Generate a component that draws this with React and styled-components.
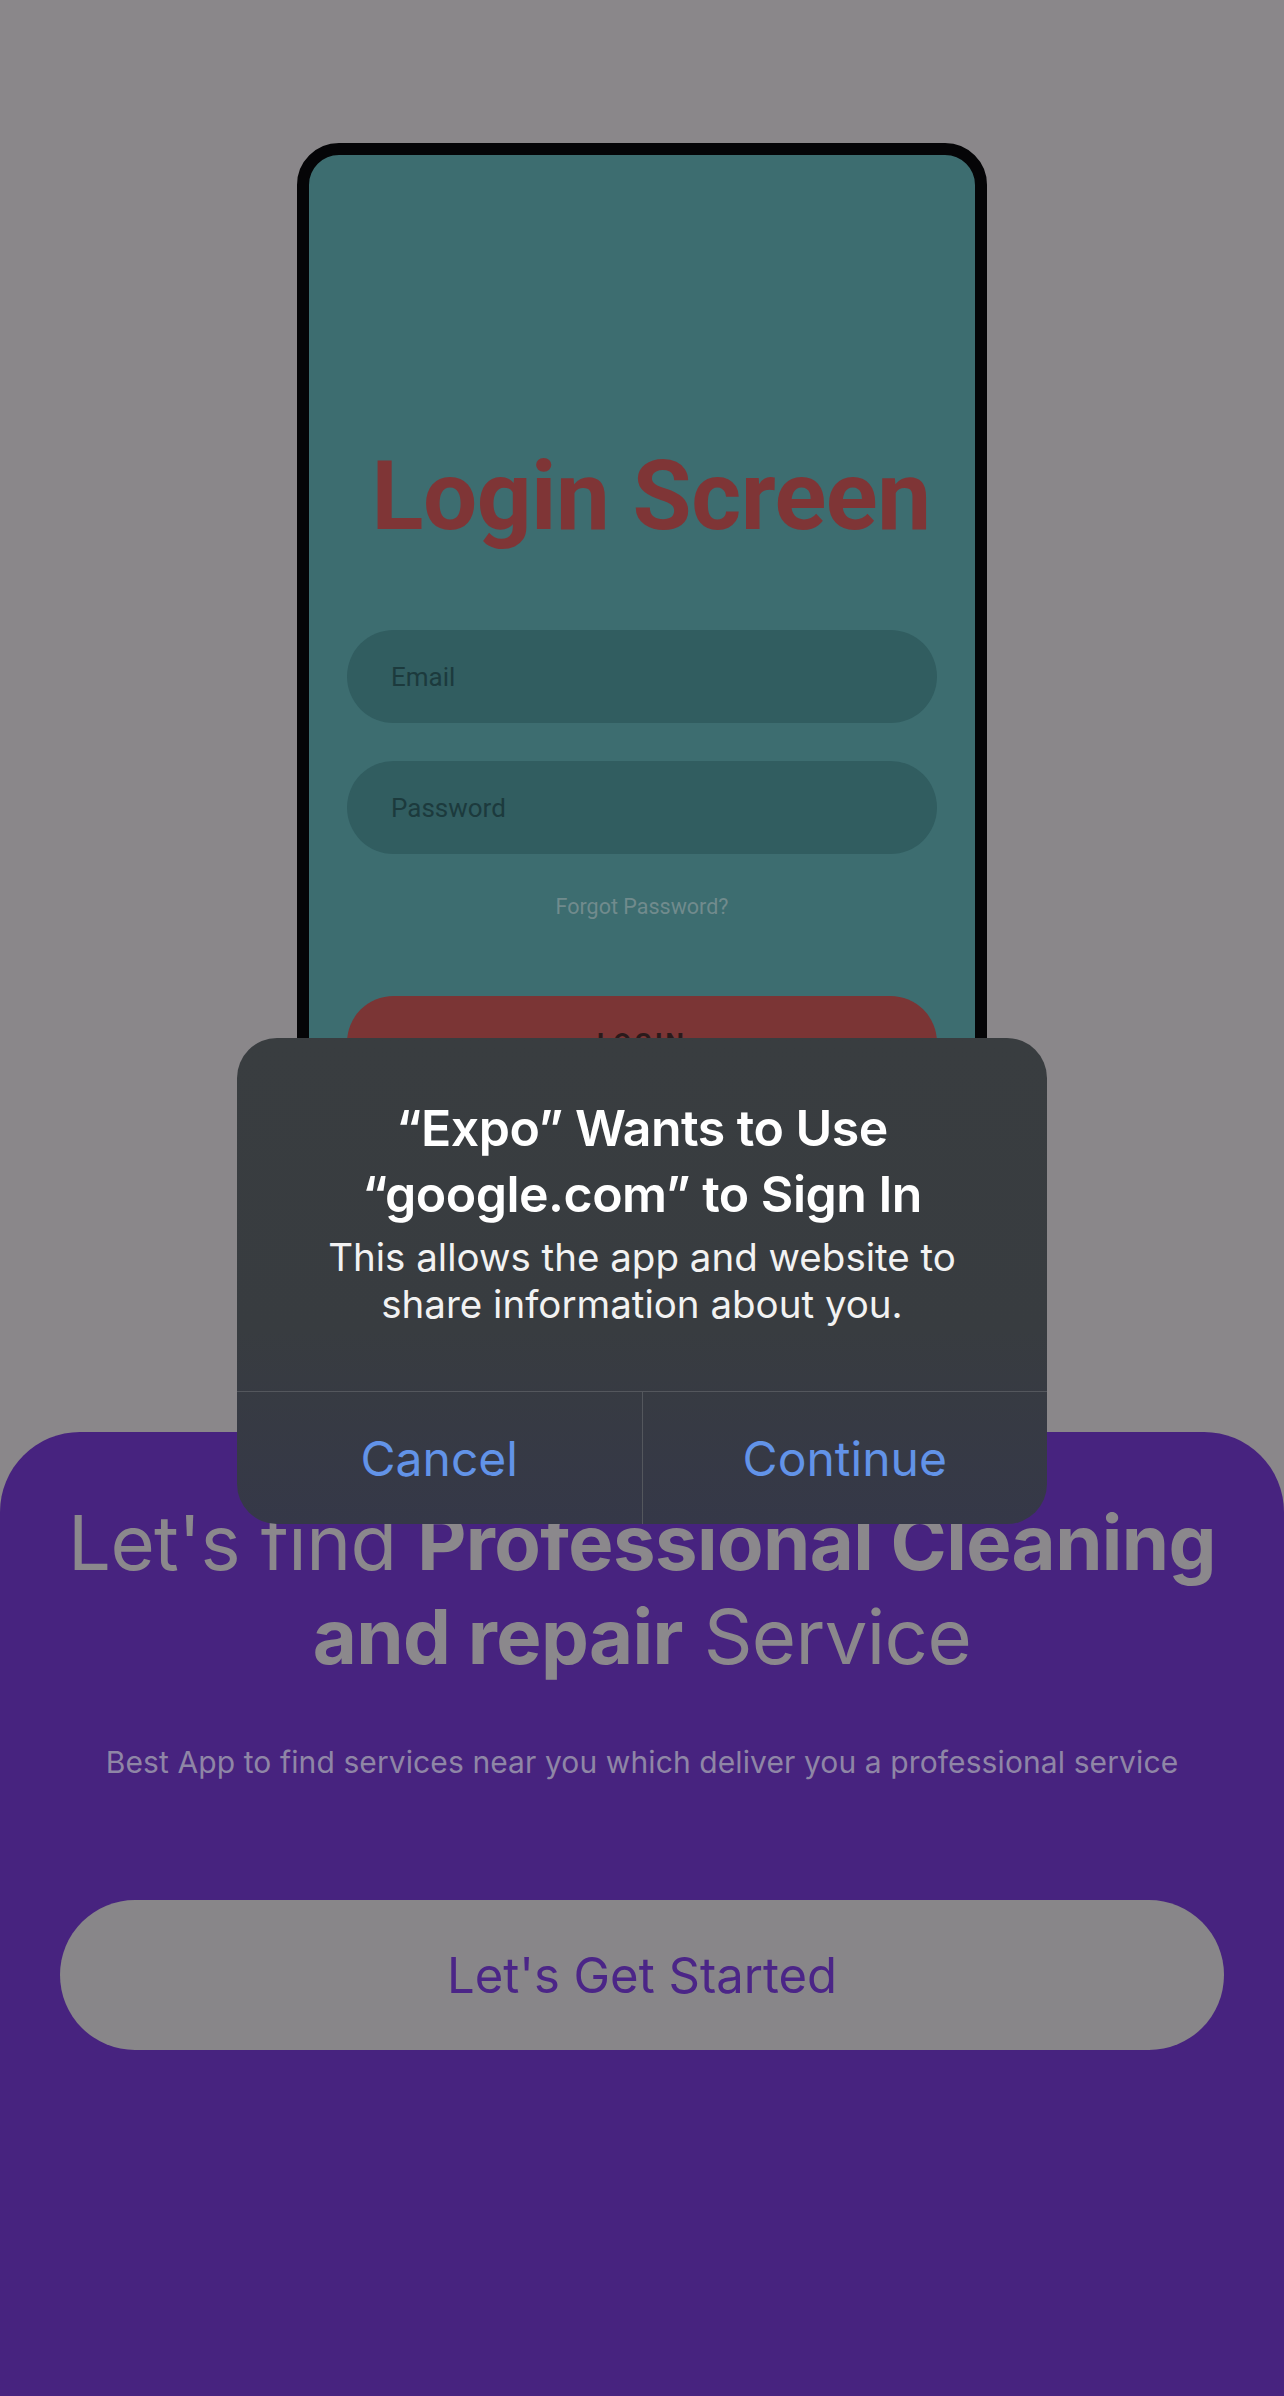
import React from "react";
import styled, { createGlobalStyle } from "styled-components";

const Global = createGlobalStyle`
  html, body {
    margin: 0;
    padding: 0;
    background: #8a878a;
  }
  #root {
    min-height: 2396px;
  }
  * { box-sizing: border-box; }
`;

const Page = styled.div`
  position: relative;
  width: 1284px;
  height: 2396px;
  overflow: hidden;
  display: flex;
  flex-direction: column;
  background: #8a878a;
  font-family: Inter, "Liberation Sans", sans-serif;
`;

const Hero = styled.section`
  height: 1432px;
  padding-top: 143px;
  display: flex;
  justify-content: center;
  flex-shrink: 0;
`;

const PhoneFrame = styled.div`
  width: 690px;
  border: 12px solid #050507;
  border-radius: 42px;
  background: #3d6d70;
  overflow: hidden;
  display: flex;
  flex-direction: column;
  align-items: center;
  font-family: Roboto, "Liberation Sans", sans-serif;
`;

const LoginTitle = styled.h1`
  margin: 286px 0 0 18px;
  font-size: 96px;
  line-height: 110px;
  font-weight: 700;
  color: #7f3536;
  letter-spacing: -0.5px;
`;

const Field = styled.div`
  width: 590px;
  height: 93px;
  border-radius: 47px;
  background: #315d60;
  display: flex;
  align-items: center;
  padding-left: 44px;
  margin-top: ${(p) => p.$top}px;
  font-size: 26px;
  color: #1c3a3d;
`;

const ForgotLink = styled.div`
  margin-top: 40px;
  font-size: 21.5px;
  line-height: 26px;
  color: #718b8d;
`;

const LoginButton = styled.div`
  margin-top: 76px;
  width: 590px;
  height: 93px;
  border-radius: 47px;
  background: #7b3535;
  display: flex;
  align-items: center;
  justify-content: center;
  font-size: 26px;
  font-weight: 700;
  letter-spacing: 3px;
  color: #2a1a1b;
`;

const Panel = styled.section`
  flex: 1;
  background: #47237f;
  border-radius: 80px 80px 0 0;
  padding: 63px 60px 0;
  display: flex;
  flex-direction: column;
  align-items: center;
`;

const Headline = styled.h2`
  margin: 0;
  font-size: 76px;
  line-height: 94px;
  font-weight: 400;
  color: #8b888c;
  text-align: center;
  white-space: nowrap;
  letter-spacing: -0.6px;
  strong { font-weight: 700; }
`;

const Subtitle = styled.p`
  margin: 60px 0 0;
  font-size: 30px;
  line-height: 38px;
  color: #8f86a6;
  text-align: center;
  white-space: nowrap;
  letter-spacing: 0.1px;
`;

const StartButton = styled.button`
  margin-top: 119px;
  width: 100%;
  height: 150px;
  border: none;
  border-radius: 75px;
  background: #888689;
  color: #4b2587;
  font-family: Inter, "Liberation Sans", sans-serif;
  font-size: 49px;
  font-weight: 400;
  cursor: pointer;
`;

const Alert = styled.div`
  position: absolute;
  top: 1038px;
  left: 237px;
  width: 810px;
  border-radius: 40px;
  overflow: hidden;
  background: linear-gradient(180deg, #393d40 0%, #383c40 60%, #353848 100%);
  color: #ffffff;
  display: flex;
  flex-direction: column;
`;

const AlertBody = styled.div`
  padding: 57px 40px 63px;
  text-align: center;
`;

const AlertTitle = styled.div`
  font-size: 50px;
  line-height: 66px;
  font-weight: 600;
  letter-spacing: -0.5px;
`;

const AlertMessage = styled.div`
  margin-top: 7px;
  font-size: 38.5px;
  line-height: 47px;
  font-weight: 400;
  color: #f2f2f2;
`;

const AlertActions = styled.div`
  display: flex;
  border-top: 1px solid #54575d;
`;

const AlertAction = styled.button`
  flex: 1;
  height: 132px;
  border: none;
  border-left: ${(p) => (p.$divider ? "1px solid #54575d" : "none")};
  background: transparent;
  color: #6293e8;
  font-family: Inter, "Liberation Sans", sans-serif;
  font-size: 48px;
  font-weight: 400;
  cursor: pointer;
`;

export default function App() {
  return (
    <Page>
      <Global />
      <Hero>
        <PhoneFrame>
          <LoginTitle>Login Screen</LoginTitle>
          <Field $top={79}>Email</Field>
          <Field $top={38}>Password</Field>
          <ForgotLink>Forgot Password?</ForgotLink>
          <LoginButton>LOGIN</LoginButton>
        </PhoneFrame>
      </Hero>
      <Panel>
        <Headline>
          Let's find <strong>Professional Cleaning</strong>
          <br />
          <strong>and repair</strong> Service
        </Headline>
        <Subtitle>
          Best App to find services near you which deliver you a professional service
        </Subtitle>
        <StartButton>Let's Get Started</StartButton>
      </Panel>
      <Alert role="alertdialog">
        <AlertBody>
          <AlertTitle>
            “Expo” Wants to Use
            <br />
            “google.com” to Sign In
          </AlertTitle>
          <AlertMessage>
            This allows the app and website to
            <br />
            share information about you.
          </AlertMessage>
        </AlertBody>
        <AlertActions>
          <AlertAction>Cancel</AlertAction>
          <AlertAction $divider>Continue</AlertAction>
        </AlertActions>
      </Alert>
    </Page>
  );
}
